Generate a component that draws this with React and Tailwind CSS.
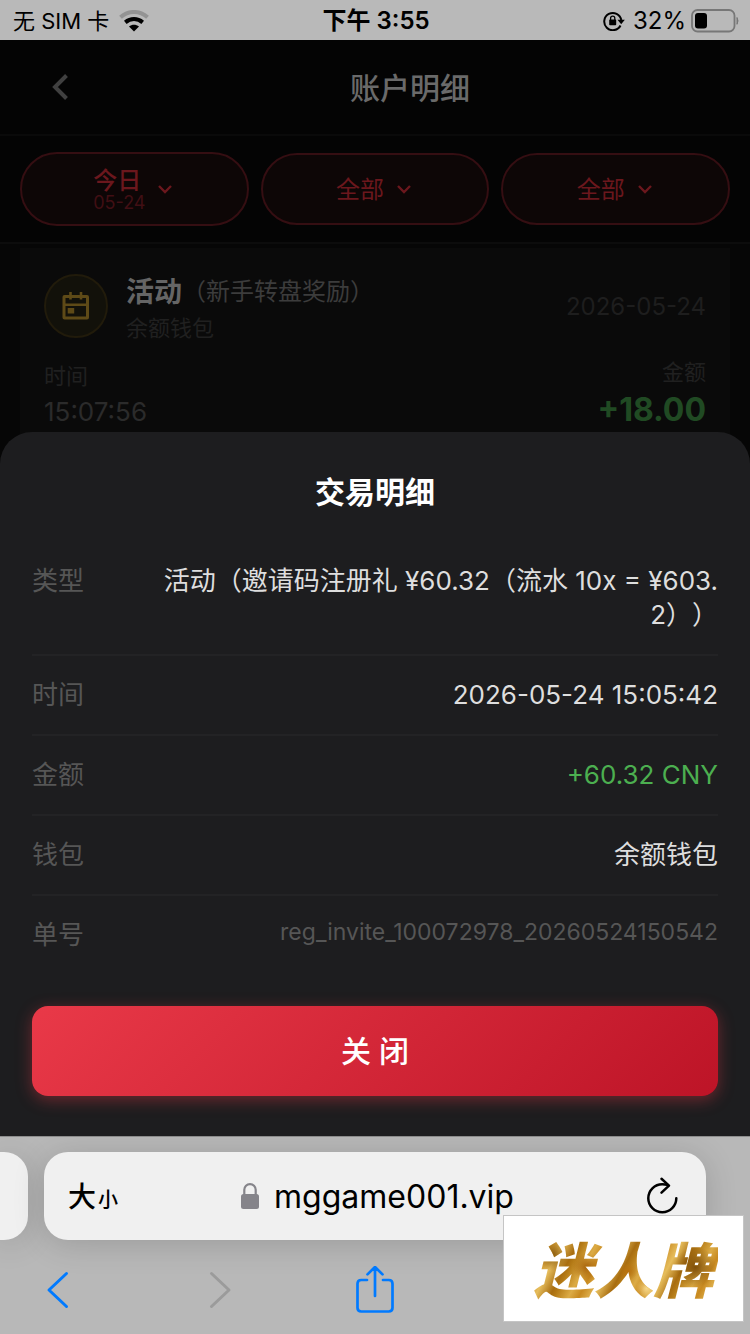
import React from "react";

function StatusBar() {
  return (
    <div className="grid h-10 grid-cols-[1fr_auto_1fr] items-center bg-[#b9b9b9] pl-[13px] pr-[11px] pt-[2px] text-2xl leading-[38px] text-black">
      <div className="flex items-center gap-[10px]">
        <span className="text-[22px]">无 SIM 卡</span>
        <svg viewBox="0 0 30 22" className="h-[22px] w-[30px]" fill="none" aria-hidden="true">
          <path d="M1.500 7.200C9 .2 21 .2 28.500 7.200" stroke="#939393" strokeWidth="4" />
          <path d="M6.300 12.400C11.500 8 18.500 8 23.700 12.400" stroke="#000" strokeWidth="4" />
          <path d="M10 16.500C13 14 17 14 20 16.500L15 21.500Z" fill="#000" />
        </svg>
      </div>
      <div className="font-semibold">下午 3:55</div>
      <div className="flex items-center justify-end">
        <svg viewBox="0 0 22 20" className="mr-2 h-5 w-[22px]" fill="none" aria-hidden="true">
          <path d="M17.500 14.500A8.600 8.600 0 1 1 18.300 9" stroke="#000" strokeWidth="2" />
          <path d="M14.500 8.800H21.800L18.200 13.200Z" fill="#000" />
          <rect x="6.200" y="8.600" width="7" height="5.600" rx="0.800" fill="#000" />
          <path d="M7.600 9V7.200a2.100 2.100 0 0 1 4.200 0V9" stroke="#000" strokeWidth="1.300" />
        </svg>
        <span>32%</span>
        <svg viewBox="0 0 48 24" className="ml-[5px] h-6 w-12" fill="none" aria-hidden="true">
          <rect x="1" y="1" width="42.500" height="21.500" rx="5.500" stroke="#777" strokeWidth="1.800" />
          <rect x="4" y="4" width="12" height="15.500" rx="3" fill="#000" />
          <path d="M46 8.500q2 3.300 0 6.800z" fill="#777" stroke="#777" />
        </svg>
      </div>
    </div>
  );
}

function FilterButton({ label, detail }) {
  return (
    <button
      type="button"
      className={
        "flex flex-1 items-center justify-center gap-[10px] rounded-full border-2 border-[#350e12] bg-[#0d0606] text-2xl leading-6 text-[#6b171d] " +
        (detail ? "h-[74px]" : "h-[72px]")
      }
    >
      <span className={"flex flex-col text-left " + (detail ? "pt-1" : "pt-[2px]")}>
        <span className={detail ? "font-medium" : ""}>{label}</span>
        {detail && <span className="text-lg leading-5 text-[#410f14]">{detail}</span>}
      </span>
      <svg viewBox="0 0 20 20" className="size-5" fill="none" aria-hidden="true">
        <path d="M4 7l6 6 6-6" stroke="currentColor" strokeWidth="2.400" />
      </svg>
    </button>
  );
}

function AccountPage() {
  return (
    <div className="col-start-1 row-start-1 bg-[#060606]">
      <header className="flex h-24 items-center border-b-2 border-[#0a0a0a] bg-[#040404] pl-11 pr-[6px]">
        <button type="button" aria-label="返回" className="size-8">
          <svg viewBox="0 0 32 32" className="size-8" fill="none" aria-hidden="true">
            <path d="M22.500 4.500L11 16l11.500 11.500" stroke="#404040" strokeWidth="4" />
          </svg>
        </button>
        <h1 className="flex-1 pt-[2px] text-center text-[30px] font-medium leading-10 text-[#6a6a6a]">账户明细</h1>
      </header>
      <div className="flex items-center gap-3 border-b-2 border-[#0c0c0c] bg-[#040404] px-5 py-4">
        <FilterButton label="今日" detail="05-24" />
        <FilterButton label="全部" />
        <FilterButton label="全部" />
      </div>
      <article className="mx-5 mt-1 bg-[#0a0a0a] px-6 pb-6 pt-[26px]">
        <div className="flex items-start">
          <div className="flex size-16 items-center justify-center rounded-full border-2 border-[#211b0b] bg-[#12110a]">
            <svg viewBox="0 0 28 28" className="size-7" fill="none" stroke="#5e4a17" aria-hidden="true">
              <rect x="2" y="4.500" width="23.500" height="21.500" rx="0.500" strokeWidth="3" />
              <path d="M2 12.800h24M8.500 0v7.500M19 0v7.500" strokeWidth="2.600" />
              <rect x="5.700" y="16" width="6.500" height="5.500" fill="#5e4a17" stroke="none" />
            </svg>
          </div>
          <div className="ml-[18px]">
            <h2 className="flex items-center text-[28px] font-bold leading-9 text-[#656565]">
              活动
              <span className="text-2xl font-normal text-[#3c3c3c] [text-spacing-trim:space-all]">（新手转盘奖励）</span>
            </h2>
            <p className="text-[22px] leading-9 text-[#202020]">余额钱包</p>
          </div>
          <time className="ml-auto text-2xl leading-[66px] text-[#1e1e1e]">2026-05-24</time>
        </div>
        <div className="mt-2 flex items-end justify-between">
          <div className="leading-9">
            <p className="text-[22px] text-[#202020]">时间</p>
            <p className="text-[26px] text-[#2b2b2b]">15:07:56</p>
          </div>
          <div className="text-right">
            <p className="text-[22px] leading-9 text-[#202020]">金额</p>
            <p className="text-[32px] font-bold leading-10 text-[#204a23]">+18.00</p>
          </div>
        </div>
      </article>
    </div>
  );
}

function DetailRow({ label, children, last }) {
  return (
    <div
      className={
        "flex items-start justify-between gap-12 py-[22px] text-[26px] leading-[34px] " +
        (last ? "" : "border-b-2 border-[#232325]")
      }
    >
      <dt className="shrink-0 text-[#565656]">{label}</dt>
      <dd className="max-w-[564px] break-all text-right text-[#dedede] [text-spacing-trim:space-all]">{children}</dd>
    </div>
  );
}

function DetailSheet() {
  return (
    <section
      role="dialog"
      aria-labelledby="sheet-title"
      className="z-10 col-start-1 row-start-1 self-end rounded-t-[32px] bg-[#1d1d1f] px-8 py-10"
    >
      <h2 id="sheet-title" className="mb-[30px] text-center text-[30px] font-bold leading-10 text-white">
        交易明细
      </h2>
      <dl>
        <DetailRow label="类型">活动（邀请码注册礼 ¥60.32（流水 10x = ¥603.2））</DetailRow>
        <DetailRow label="时间">2026-05-24 15:05:42</DetailRow>
        <DetailRow label="金额">
          <span className="text-[#4caf50]">+60.32 CNY</span>
        </DetailRow>
        <DetailRow label="钱包">余额钱包</DetailRow>
        <DetailRow label="单号" last>
          <span className="block text-[23px] leading-[29px] text-[#565656]">reg_invite_100072978_20260524150542</span>
        </DetailRow>
      </dl>
      <button
        type="button"
        className="mt-8 h-[90px] w-full rounded-2xl bg-linear-[135deg,#e93948,#bd1427] text-[30px] font-medium text-white shadow-[0_4px_16px_rgba(230,57,70,0.4)]"
      >
        关 闭
      </button>
    </section>
  );
}

function BrowserBar() {
  return (
    <footer className="relative h-[198px] border-t border-[#8e8e8e] bg-[#b8b8b8] pt-[15px]">
      <div className="flex h-[88px] gap-4 pr-11">
        <div className="w-7 rounded-r-3xl bg-[#f0f0f0] shadow-[0_4px_32px_rgba(0,0,0,0.16)]" />
        <div className="grid min-w-0 flex-1 grid-cols-[1fr_auto_1fr] items-center rounded-3xl bg-[#f0f0f0] pl-6 pr-7 text-black shadow-[0_4px_32px_rgba(0,0,0,0.16)]">
          <button type="button" aria-label="大小" className="flex items-baseline gap-[2px] justify-self-start pt-[2px] font-medium">
            <span className="text-[28px]">大</span>
            <span className="text-xl">小</span>
          </button>
          <div className="ml-2 flex items-center gap-[14px]">
            <svg viewBox="0 0 20 28" className="h-7 w-5" fill="none" aria-hidden="true">
              <path d="M4.300 13V7.800a5.700 5.700 0 0 1 11.400 0V13" stroke="#85848a" strokeWidth="2.200" />
              <rect x="1" y="12" width="18" height="15" rx="2.500" fill="#85848a" />
            </svg>
            <input
              type="text"
              aria-label="网址"
              defaultValue="mggame001.vip"
              className="field-sizing-content bg-transparent pt-[2px] text-[32px] leading-[44px] outline-none"
            />
          </div>
          <button type="button" aria-label="重新载入" className="justify-self-end">
            <svg viewBox="0 0 32 38" className="h-[38px] w-8" fill="none" stroke="#000" strokeWidth="2.500" strokeLinecap="round" aria-hidden="true">
              <path d="M21 7.800C19.500 7.300 18 7.200 16.300 7.200A14 14 0 1 0 30.300 21.200" />
              <path d="M15.500 1.800l7.500 6.800-7.500 7" strokeLinejoin="round" />
            </svg>
          </button>
        </div>
      </div>
      <nav className="mt-[26px] grid grid-cols-[1fr_auto_1fr] items-center px-[34px]">
        <div className="flex justify-between pr-[107px]">
          <button type="button" aria-label="后退">
            <svg viewBox="0 0 48 48" className="size-12" fill="none" aria-hidden="true">
              <path d="M32.500 7.500L15 24l17.500 16.500" stroke="#007aff" strokeWidth="3" strokeLinecap="round" strokeLinejoin="round" />
            </svg>
          </button>
          <button type="button" aria-label="前进" disabled>
            <svg viewBox="0 0 48 48" className="size-12" fill="none" aria-hidden="true">
              <path d="M15.500 7.500L33 24 15.500 40.500" stroke="#9b9b9b" strokeWidth="3" strokeLinecap="round" strokeLinejoin="round" />
            </svg>
          </button>
        </div>
        <button type="button" aria-label="分享">
          <svg viewBox="0 0 48 48" className="size-12" fill="none" stroke="#007aff" strokeWidth="2.700" strokeLinecap="round" aria-hidden="true">
            <path d="M16 14H10.300q-3.800 0-3.800 3.800V41.700q0 3.800 3.800 3.800H37.700q3.800 0 3.800-3.800V17.800q0-3.800-3.800-3.800H32" />
            <path d="M24 30V1.200M16.500 8.400L24 1l7.500 7.400" strokeLinejoin="round" />
          </svg>
        </button>
      </nav>
      <div className="absolute bottom-3 right-[6px] flex h-[107px] w-[241px] items-center justify-center border border-[#c5c5c5] bg-white pt-1">
        <span className="bg-[radial-gradient(circle_at_12%_30%,#8a5a0c_0%,transparent_9%),radial-gradient(circle_at_30%_45%,#a8640c_0%,transparent_10%),radial-gradient(circle_at_62%_72%,#f6d88a_0%,transparent_8%),radial-gradient(circle_at_88%_45%,#80500a_0%,transparent_12%),radial-gradient(circle_at_52%_50%,#b8720f_0%,transparent_9%),repeating-linear-gradient(118deg,#b47a16_0px,#dcab45_13px,#c8891f_22px,#e6bd5c_35px,#a86d10_48px,#b47a16_52px)] bg-clip-text px-1 text-[60px] font-black italic leading-[80px] text-transparent">
          迷人牌
        </span>
      </div>
    </footer>
  );
}

export default function App() {
  return (
    <div
      lang="zh-CN"
      className="flex min-h-screen flex-col overflow-x-hidden bg-[#060606] font-[Inter,'Noto_Sans_CJK_SC',sans-serif]"
    >
      <StatusBar />
      <main className="grid flex-1 grid-cols-1">
        <AccountPage />
        <DetailSheet />
      </main>
      <BrowserBar />
    </div>
  );
}
